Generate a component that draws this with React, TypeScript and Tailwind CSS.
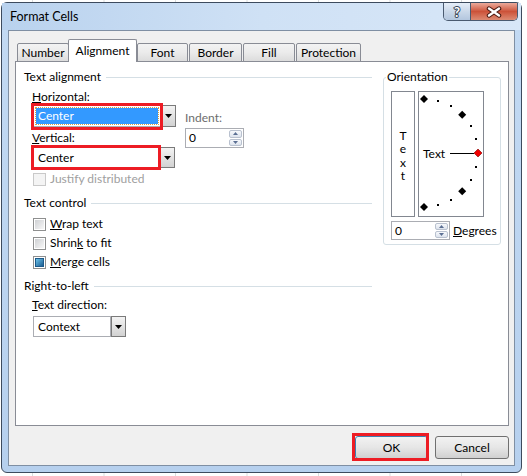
import React from "react";

const Tri = ({ up = false, color = "#000", w = 7, h = 4 }: { up?: boolean; color?: string; w?: number; h?: number }) => (
  <svg width={w} height={h} viewBox={`0 0 ${w} ${h}`}>
    <path d={up ? `M0 ${h}L${w / 2} 0L${w} ${h}Z` : `M0 0L${w} 0L${w / 2} ${h}Z`} fill={color} />
  </svg>
);

const DropButton = () => (
  <div className="w-[15px] flex items-center justify-center border border-[#7a7a7a] bg-linear-to-b from-[#f3f3f3] to-[#d2d2d2]">
    <Tri />
  </div>
);

const Spinner = ({ className }: { className: string }) => (
  <div className={`flex border border-[#abadb3] bg-white ${className}`}>
    <div className="flex-1 flex items-center pl-[3px]">0</div>
    <div className="w-[15px] flex flex-col p-px gap-px">
      <div className="flex-1 flex items-center justify-center rounded-[2px] border border-[#b9c1cf] bg-linear-to-b from-[#f7f9fc] to-[#dde3ed]">
        <Tri up color="#5b6f93" w={5} h={3} />
      </div>
      <div className="flex-1 flex items-center justify-center rounded-[2px] border border-[#b9c1cf] bg-linear-to-b from-[#f7f9fc] to-[#dde3ed]">
        <Tri color="#5b6f93" w={5} h={3} />
      </div>
    </div>
  </div>
);

const Check = ({ mixed = false, disabled = false }: { mixed?: boolean; disabled?: boolean }) => (
  <div
    className={`w-[13px] h-[13px] border p-px ${
      disabled ? "border-[#c9c9c9] bg-[#f4f4f4]" : "border-[#8e8f8f] bg-white"
    }`}
  >
    <div
      className={`w-full h-full flex items-center justify-center ${
        disabled ? "bg-[#f4f4f4]" : "bg-linear-to-br from-[#cfd1d4] to-[#f7f7f7]"
      }`}
    >
      {mixed && <div className="w-[9px] h-[9px] border border-[#1d5a8a] bg-linear-to-br from-[#6cc4ea] to-[#1b5d92]" />}
    </div>
  </div>
);

const Header = ({ label }: { label: string }) => (
  <div className="flex items-center h-[16px]">
    <span>{label}</span>
    <div className="flex-1 h-px bg-[#d5dfe5] ml-[5px]" />
  </div>
);

const CheckRow = ({ children, mixed, disabled }: { children: React.ReactNode; mixed?: boolean; disabled?: boolean }) => (
  <div className={`flex items-center h-[16px] ml-[9px] gap-[4px] ${disabled ? "text-[#a0a0a0]" : ""}`}>
    <Check mixed={mixed} disabled={disabled} />
    <span>{children}</span>
  </div>
);

const Dial = () => {
  const angles = Array.from({ length: 13 }, (_, i) => 90 - i * 15);
  return (
    <svg width="64" height="124">
      {angles.map((a) => {
        const r = (a * Math.PI) / 180;
        const x = 5 + 54 * Math.cos(r);
        const y = 61 - 54 * Math.sin(r);
        if (a % 45 === 0) {
          return (
            <path
              key={a}
              d={`M${x} ${y - 4}L${x + 4} ${y}L${x} ${y + 4}L${x - 4} ${y}Z`}
              fill={a === 0 ? "#f00000" : "#000"}
              stroke={a === 0 ? "#7a0000" : "none"}
              strokeWidth="0.6"
            />
          );
        }
        return <rect key={a} x={Math.round(x) - 1} y={Math.round(y) - 1} width="2" height="2" fill="#000" />;
      })}
      <line x1="31" y1="61.5" x2="55" y2="61.5" stroke="#000" />
      <text x="4" y="66" fontFamily="Lato, sans-serif" fontSize="12" fill="#000">
        Text
      </text>
    </svg>
  );
};

const tabs = [
  { label: "Number", cls: "w-[52px]" },
  { label: "Alignment", cls: "w-[69px] -ml-px", active: true },
  { label: "Font", cls: "w-[51px]" },
  { label: "Border", cls: "w-[53px] ml-[1px]" },
  { label: "Fill", cls: "w-[52px] ml-[1px]" },
  { label: "Protection", cls: "w-[65px] ml-[1px]" },
];

export default function App() {
  return (
    <div className="w-[527px] h-[476px] overflow-hidden bg-white bg-[linear-gradient(90deg,#dadcdd_1px,transparent_1px)] bg-[length:71.5px_100%] bg-[position:32px_0] pt-[2px] pl-[1px] font-['Lato',sans-serif] text-[12px] leading-[16px] text-black">
      <div className="w-[521px] h-[471px] rounded-[6px] border border-[#3d4b5e] bg-linear-to-b from-[#c3daf3] to-[#b6d0ee] flex flex-col px-[6px] pb-[6px]">
        {/* title bar */}
        <div className="h-[27px] flex items-start bg-linear-to-r from-[#b9d2ee] via-[#cfe1f5] to-[#d8e7f8] -mx-[6px] px-[6px]">
          <div className="ml-[2px] h-[27px] flex items-center text-[12.5px]">Format Cells</div>
          <div className="ml-auto -mr-[3px] flex h-[18px] rounded-b-[5px] border border-t-0 border-[#4a5a70] overflow-hidden">
            <div className="w-[27px] flex items-center justify-center border-r border-[#4a5a70] bg-linear-to-b from-[#e6eef8] via-[#cad8e9] to-[#b3c6de]">
              <svg width="12" height="14">
                <text
                  x="6"
                  y="12"
                  textAnchor="middle"
                  fontFamily="Lato, sans-serif"
                  fontWeight="bold"
                  fontSize="13"
                  fill="#fff"
                  stroke="#3c4a5c"
                  strokeWidth="2"
                  paintOrder="stroke"
                >
                  ?
                </text>
              </svg>
            </div>
            <div className="w-[46px] flex items-center justify-center bg-linear-to-b from-[#eaa99a] via-[#cc5239] to-[#dc8a72]">
              <svg width="16" height="12">
                <path d="M3 2.5L13 9.5M13 2.5L3 9.5" stroke="#4a1a12" strokeWidth="4.5" strokeLinecap="round" />
                <path d="M3 2.5L13 9.5M13 2.5L3 9.5" stroke="#fff" strokeWidth="2.4" strokeLinecap="round" />
              </svg>
            </div>
          </div>
        </div>

        {/* client area */}
        <div className="flex-1 border border-[#7f8fa3] bg-[#f0f0f0] flex flex-col pl-[6px] pr-[5px] pt-[8px] pb-[6px]">
          {/* tabs */}
          <div className="flex items-end h-[23px] -mb-px relative z-10 pl-[2px]">
            {tabs.map((t) =>
              t.active ? (
                <div
                  key={t.label}
                  className={`${t.cls} h-[23px] relative z-10 border border-b-0 border-[#898c95] rounded-t-[2px] bg-white flex items-center justify-center pb-[1px]`}
                >
                  {t.label}
                </div>
              ) : (
                <div
                  key={t.label}
                  className={`${t.cls} h-[19px] border border-[#898c95] rounded-t-[2px] bg-linear-to-b from-[#f3f3f3] via-[#ebebeb] to-[#dcdcdc] flex items-center justify-center`}
                >
                  {t.label}
                </div>
              )
            )}
          </div>

          {/* panel */}
          <div className="h-[365px] border border-[#898c95] bg-white flex pt-[7px] pl-[8px]">
            {/* left column */}
            <div className="w-[348px] flex flex-col">
              <Header label="Text alignment" />
              <div className="mt-[4px] ml-[8px] h-[16px]">
                <span className="underline">H</span>orizontal:
              </div>
              <div className="flex h-[22px] ml-[9px] items-start">
                <div className="relative flex h-[22px] w-[143px]">
                  <div className="flex-1 border border-[#abadb3] bg-white p-[2px]">
                    <div className="h-full bg-[#3399ff] text-white flex items-center pl-[2px] outline-1 outline-dotted outline-[#d9a040]">
                      Center
                    </div>
                  </div>
                  <DropButton />
                  <div className="absolute -left-[2px] -top-[2px] w-[132px] h-[27px] border-[3px] border-[#ed1c24]" />
                </div>
                <div className="ml-[9px] mt-[5px] flex flex-col">
                  <div className="h-[16px] text-[#6d6d6d]">Indent:</div>
                  <Spinner className="mt-[2px] w-[59px] h-[20px]" />
                </div>
              </div>
              <div className="mt-[3px] ml-[8px] h-[16px]">
                <span className="underline">V</span>ertical:
              </div>
              <div className="mt-[1px] ml-[9px] relative flex h-[21px] w-[142px]">
                <div className="flex-1 border border-[#abadb3] bg-white flex items-center pl-[4px]">Center</div>
                <DropButton />
                <div className="absolute -left-[2px] -top-[2px] w-[130px] h-[25px] border-[3px] border-[#ed1c24]" />
              </div>
              <div className="mt-[3px]">
                <CheckRow disabled>Justify distributed</CheckRow>
              </div>

              <div className="mt-[8px]">
                <Header label="Text control" />
              </div>
              <div className="mt-[5px] flex flex-col gap-[3px]">
                <CheckRow>
                  <span className="underline">W</span>rap text
                </CheckRow>
                <CheckRow>
                  Shrin<span className="underline">k</span> to fit
                </CheckRow>
                <CheckRow mixed>
                  <span className="underline">M</span>erge cells
                </CheckRow>
              </div>

              <div className="mt-[8px]">
                <Header label="Right-to-left" />
              </div>
              <div className="mt-[3px] ml-[8px] h-[16px]">
                <span className="underline">T</span>ext direction:
              </div>
              <div className="mt-[3px] ml-[9px] flex h-[21px] w-[93px]">
                <div className="flex-1 border border-[#abadb3] bg-white flex items-center pl-[4px]">Context</div>
                <DropButton />
              </div>
            </div>

            {/* orientation */}
            <fieldset className="ml-[11px] w-[118px] h-[176px] border border-[#d5dfe5] rounded-[3px]">
              <legend className="ml-[2px] px-[1px] leading-[16px]">Orientation</legend>
              <div className="pl-[7px] pt-[6px] flex flex-col">
                <div className="flex gap-[3px]">
                  <div className="w-[24px] h-[126px] border border-[#828790] flex flex-col items-center justify-center leading-[13.5px] pt-[3px]">
                    <span>T</span>
                    <span>e</span>
                    <span>x</span>
                    <span>t</span>
                  </div>
                  <div className="w-[66px] h-[126px] border border-[#828790]">
                    <Dial />
                  </div>
                </div>
                <div className="mt-[4px] flex items-center">
                  <Spinner className="w-[59px] h-[19px]" />
                  <span className="ml-[3px]">
                    <span className="underline">D</span>egrees
                  </span>
                </div>
              </div>
            </fieldset>
          </div>

          {/* buttons */}
          <div className="mt-[10px] flex justify-end gap-[7px]">
            <div className="relative w-[73px] h-[23px]">
              <div className="w-full h-full rounded-[3px] border border-[#3c7fb1] bg-linear-to-b from-[#f2f2f2] via-[#e6e6e6] to-[#d0d0d0] flex items-center justify-center">
                OK
              </div>
              <div className="absolute -left-[3px] -top-[3px] w-[77px] h-[28px] border-[3px] border-[#ed1c24]" />
            </div>
            <div className="w-[74px] h-[23px] rounded-[3px] border border-[#707070] bg-linear-to-b from-[#f2f2f2] via-[#e6e6e6] to-[#d0d0d0] flex items-center justify-center">
              Cancel
            </div>
          </div>
        </div>
      </div>
    </div>
  );
}
